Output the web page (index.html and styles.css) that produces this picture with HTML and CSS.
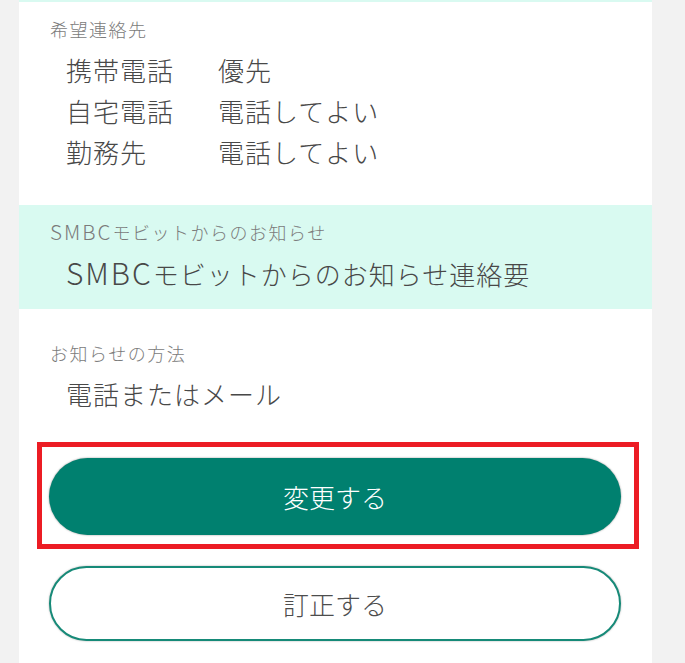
FILE: index.html
```html
<!DOCTYPE html>
<html lang="ja">
<head>
<meta charset="utf-8">
<title>確認</title>
<link rel="stylesheet" href="styles.css">
</head>
<body>
<div class="page">
  <main class="panel">
    <div class="prev-section"></div>
    <section class="section section-contact">
      <div class="label">希望連絡先</div>
      <div class="contact-grid">
        <div class="value">携帯電話</div><div class="value">優先</div>
        <div class="value">自宅電話</div><div class="value">電話してよい</div>
        <div class="value">勤務先</div><div class="value">電話してよい</div>
      </div>
    </section>
    <section class="section section-notice">
      <div class="label"><span class="latin">SMBC</span>モビットからのお知らせ</div>
      <div class="value single"><span class="latin">SMBC</span>モビットからのお知らせ連絡要</div>
    </section>
    <section class="section section-method">
      <div class="label">お知らせの方法</div>
      <div class="value single">電話またはメール</div>
      <div class="actions">
        <button class="btn btn-primary" type="button">変更する</button>
        <button class="btn btn-outline" type="button">訂正する</button>
      </div>
    </section>
  </main>
  <div class="highlight"></div>
</div>
</body>
</html>
```

FILE: styles.css
```css
html, body {
  margin: 0;
  padding: 0;
  background: #f2f2f2;
  height: 100%;
  overflow: hidden;
}

.page {
  position: relative;
  min-height: 100%;
  font-family: "Noto Sans CJK JP", "Noto Sans", sans-serif;
}

.panel {
  margin-left: 19px;
  width: 633px;
  min-height: 663px;
  background: #ffffff;
}

.prev-section {
  height: 2px;
  background: #d9faf1;
}

.section {
  padding-left: 31px;
}

.section-contact {
  padding-top: 15px;
  padding-bottom: 33px;
}

.section-notice {
  background: #d9faf1;
  padding-top: 15px;
  padding-bottom: 15px;
}

.section-method {
  padding-top: 32px;
}

.label {
  font-size: 18px;
  line-height: 24px;
  height: 24px;
  letter-spacing: 1.5px;
  font-weight: 300;
  color: #7b7b7b;
  white-space: nowrap;
}

.latin {
  font-size: 1.15em;
  line-height: 0;
  letter-spacing: 2px;
}

.value {
  font-size: 26px;
  line-height: 41px;
  height: 41px;
  letter-spacing: 1px;
  font-weight: 300;
  color: #484848;
  white-space: nowrap;
}

.contact-grid {
  margin-top: 8px;
  padding-left: 16px;
  display: grid;
  grid-template-columns: 152px auto;
}

.single {
  margin-top: 9px;
  padding-left: 16px;
}

.section-method .single {
  margin-top: 8px;
}

.actions {
  margin-top: 44px;
  margin-left: -1px;
  display: flex;
  flex-direction: column;
  gap: 31px;
}

.btn {
  width: 572px;
  border-radius: 40px;
  font-family: "Noto Sans CJK JP", "Noto Sans", sans-serif;
  font-size: 26px;
  font-weight: 300;
  padding: 0;
  cursor: pointer;
  box-sizing: border-box;
}

.btn-primary {
  height: 77px;
  background: #00806f;
  color: #ffffff;
  border: none;
  box-shadow: 0 0 2px rgba(0, 0, 0, 0.45);
}

.btn-outline {
  height: 75px;
  background: #ffffff;
  color: #4d4d4d;
  border: 2px solid #168a78;
  box-shadow: 0 0 2px rgba(0, 0, 0, 0.35);
}

.highlight {
  position: absolute;
  left: 37px;
  top: 442px;
  width: 602px;
  height: 107px;
  border: 5px solid #ec1c24;
  box-sizing: border-box;
  pointer-events: none;
}
```
